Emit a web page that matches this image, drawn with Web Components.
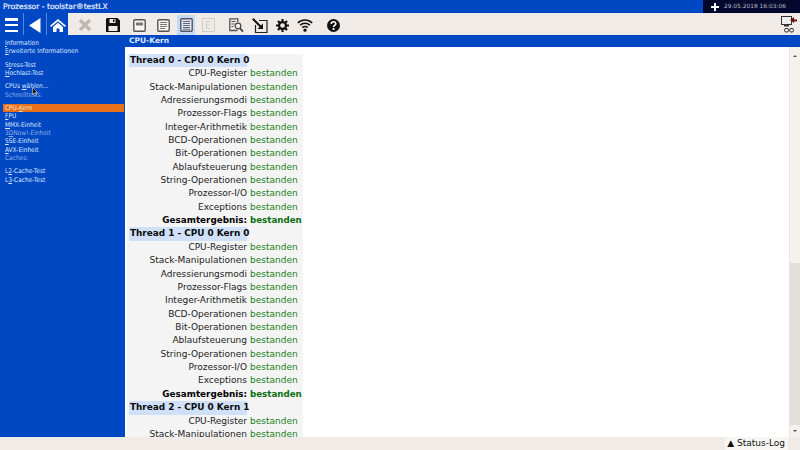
<!DOCTYPE html>
<html lang="de"><head><meta charset="utf-8"><title>Prozessor</title>
<style>
html,body{margin:0;padding:0;width:800px;height:450px;overflow:hidden;font-family:"DejaVu Sans",sans-serif}
body{display:block}
</style></head><body>
<app-shell></app-shell>
<script>
const ic={
back:'<svg width="12" height="15" viewBox="0 0 12 15"><path d="M11.500 0v15L0 7.500z" fill="#fff"/></svg>',
home:'<svg width="16" height="13" viewBox="0 0 16 13"><path d="M8 0 0 6.700l1 1.200L8 2.200l7 5.700 1-1.200z" fill="#fff"/><path d="M3 8 8 3.800 13 8v5h-3.500V9.500h-3V13H3z" fill="#fff"/></svg>',
x:'<svg width="14" height="12" viewBox="0 0 14 12"><path d="M2 1l10 10M12 1 2 11" stroke="#bdb8b4" stroke-width="3.400"/></svg>',
save:'<svg width="14" height="14" viewBox="0 0 14 14"><path fill-rule="evenodd" d="M1 0h10.500L14 2.500V14H0V1zM3.500 1v4h6V1zM2.500 8v5h9V8z" fill="#111"/><rect x="7" y="1.500" width="1.500" height="2.500" fill="#111"/></svg>',
doc1:'<svg width="13" height="13" viewBox="0 0 13 13"><rect x=".8" y=".8" width="11.400" height="11.400" rx="1" fill="#f8f6f3" stroke="#555" stroke-width="1.400"/><path d="M3 3.500h7v3H3z" fill="#777"/></svg>',
doc2:'<svg width="13" height="13" viewBox="0 0 13 13"><rect x=".8" y=".8" width="11.400" height="11.400" rx="1" fill="#f8f6f3" stroke="#555" stroke-width="1.400"/><path d="M3 3.500h7M3 5.500h7M3 7.500h7M3 9.500h5" stroke="#777"/></svg>',
doc3:'<svg width="13" height="14" viewBox="0 0 13 14"><rect x=".8" y=".8" width="11.400" height="12.400" rx="1" fill="#dfe8f2" stroke="#556" stroke-width="1.400"/><path d="M3 3.500h7M3 5.500h7M3 7.500h7M3 9.500h7M3 11.200h7" stroke="#667"/></svg>',
doc4:'<svg width="13" height="14" viewBox="0 0 13 14"><rect x=".5" y=".5" width="12" height="13" fill="#eeeae6" stroke="#d2cec9"/><path d="M8.500 3.500H4.500v7h4M4.500 7h3" fill="none" stroke="#d2cec9"/></svg>',
find:'<svg width="15" height="14" viewBox="0 0 15 14"><path d="M8.500 12.500H.8V.8h8V4" fill="none" stroke="#555" stroke-width="1.300"/><path d="M2.500 3.500h4M2.500 6h3M2.500 8.500h2" stroke="#555"/><circle cx="9" cy="8" r="2.800" fill="#f1ede8" stroke="#444" stroke-width="1.200"/><path d="M11 10.300l3 3.300" stroke="#333" stroke-width="1.600"/></svg>',
arrow:'<svg width="16" height="15" viewBox="0 0 16 15"><path d="M7 2.500h8v12H3.500V7" fill="none" stroke="#222" stroke-width="1.200"/><path d="M.8.800l8 8" stroke="#111" stroke-width="2"/><path d="M11 11V5.500L5.500 11z" fill="#111"/></svg>',
gear:'<svg width="13" height="13" viewBox="0 0 15 15"><circle cx="7.500" cy="7.500" r="4" fill="none" stroke="#111" stroke-width="2.600"/><path d="M7.500 0v3M7.500 12v3M0 7.500h3M12 7.500h3M2.200 2.200l2.100 2.100M10.700 10.700l2.100 2.100M12.800 2.200l-2.100 2.100M4.300 10.700l-2.100 2.100" stroke="#111" stroke-width="2.400"/></svg>',
wifi:'<svg width="16" height="14" viewBox="0 0 17 15"><path d="M.8 5.200a11 11 0 0 1 15.400 0M3.200 7.800a7.500 7.500 0 0 1 10.600 0M5.600 10.300a4 4 0 0 1 5.800 0" fill="none" stroke="#111" stroke-width="1.600"/><circle cx="8.500" cy="13" r="1.700" fill="#111"/></svg>',
help:'<svg width="13" height="13" viewBox="0 0 14 14"><circle cx="7" cy="7" r="7" fill="#111"/><path d="M4.600 5.300c0-3 4.900-3 4.900-.2 0 1.800-2.400 1.700-2.400 3.500" fill="none" stroke="#fff" stroke-width="1.700"/><rect x="6.100" y="9.700" width="2" height="2" fill="#fff"/></svg>',
net:'<svg width="16" height="17" viewBox="0 0 16 17"><rect x=".5" y=".5" width="10" height="8" fill="#eee" stroke="#333"/><rect x="3" y="8.500" width="5" height="2" fill="#333"/><path d="M16 3.500h-3V1L9 4l4 3V5.500h3z" fill="#6b0d10"/><rect x="3.500" y="12.500" width="4" height="3.500" rx="1.500" fill="none" stroke="#333"/><rect x="8.500" y="12.500" width="4" height="3.500" rx="1.500" fill="none" stroke="#333"/></svg>'
};
function def(name,html,init){
  customElements.define(name,class extends HTMLElement{
    constructor(){super();this.attachShadow({mode:'open'}).innerHTML=html;}
    connectedCallback(){if(init)init.call(this,this.shadowRoot);}
  });
}
def('title-bar',`<style>
:host{display:flex;height:13px;background:#0047c4;color:#e8effa;font:7.600px/14px "DejaVu Sans",sans-serif}
.t{flex:1;padding:0 0 0 3px;white-space:nowrap;-webkit-text-stroke:.2px #e8effa}
.c{width:97px;background:#04082c;display:flex;align-items:center;color:#b5bccb;font:5.900px/13px "DejaVu Sans",sans-serif}
.p{width:8px;height:8px;margin:0 5px 0 8px;position:relative;flex:none}
.p::before{content:"";position:absolute;left:0;right:0;top:3px;height:2px;background:#fff}
.p::after{content:"";position:absolute;top:0;bottom:0;left:3px;width:2px;background:#fff}
</style><div class="t">Prozessor - toolstar®testLX</div><div class="c"><span class="p"></span>29.05.2018 16:03:06</div>`);
def('tool-btn',`<style>
:host{display:flex;align-items:center;justify-content:center;width:18px;height:20px;margin:2px 0 0 var(--g,5px);flex:none}
:host([active]){background:#c4d9f2}
</style><slot></slot>`);
def('tool-bar',`<style>
:host{display:flex;height:22px;background:#0047c4}
.blue{width:68px;display:flex;flex:none;align-items:center}
.burger{width:13px;height:14px;display:flex;flex-direction:column;justify-content:space-between}
.burger i{height:2.500px;background:#fff;display:block}
.sep{width:1px;height:22px;background:#5a86d8;flex:none}
.b{display:flex;align-items:center;justify-content:center;flex:none;height:22px;padding-top:2px;box-sizing:border-box}
.light{flex:1;background:#f0ebe6;display:flex;align-items:flex-start}
.sp{flex:1}
.net{margin:3px 3px 0 0;display:flex}
</style>
<div class="blue"><div class="b" style="width:23px"><div class="burger"><i></i><i></i><i></i></div></div><div class="sep"></div><div class="b" style="width:22px">${ic.back}</div><div class="sep"></div><div class="b" style="width:21px">${ic.home}</div></div>
<div class="light"><tool-btn style="--g:8px">${ic.x}</tool-btn><tool-btn style="--g:9.500px">${ic.save}</tool-btn><tool-btn style="--g:9px">${ic.doc1}</tool-btn><tool-btn style="--g:5.500px">${ic.doc2}</tool-btn><tool-btn active>${ic.doc3}</tool-btn><tool-btn style="--g:4px">${ic.doc4}</tool-btn><tool-btn style="--g:10px">${ic.find}</tool-btn><tool-btn style="--g:5.500px">${ic.arrow}</tool-btn><tool-btn style="--g:4.500px">${ic.gear}</tool-btn><tool-btn>${ic.wifi}</tool-btn><tool-btn style="--g:10px">${ic.help}</tool-btn><div class="sp"></div><div class="net">${ic.net}</div></div>`);
def('side-item',`<style>
:host{display:block;height:8.350px;line-height:8.350px;margin:0 1px 0 3px;padding-left:2px;white-space:nowrap;color:#dce8fa;font-size:6.500px;font-stretch:condensed}
:host([dim]){color:#8fb0e6}
:host([sel]){background:#e8701a;color:#f5e3d0}
</style><slot></slot>`);
def('side-nav',`<style>
:host{display:flex;flex-direction:column;width:125px;flex:none;background:#0047c4;padding-top:4px;box-sizing:border-box;position:relative;font-family:"DejaVu Sans",sans-serif}
.g{height:5px}
.u{text-decoration:underline;text-decoration-thickness:.6px;text-underline-offset:1px}
svg{position:absolute;left:32px;top:52px}
</style>
<side-item><span class="u">I</span>nformation</side-item>
<side-item><span class="u">E</span>rweiterte Informationen</side-item>
<div class="g"></div>
<side-item>S<span class="u">t</span>ress-Test</side-item>
<side-item><span class="u">H</span>ochlast-Test</side-item>
<div class="g"></div>
<side-item>CPUs <span class="u">w</span>ählen...</side-item>
<side-item dim>Schnelltests:</side-item>
<div class="g"></div>
<side-item sel>CPU-<span class="u">K</span>ern</side-item>
<side-item><span class="u">F</span>PU</side-item>
<side-item><span class="u">M</span>MX-Einheit</side-item>
<side-item dim>3<span class="u">D</span>Now!-Einheit</side-item>
<side-item><span class="u">S</span>SE-Einheit</side-item>
<side-item><span class="u">A</span>VX-Einheit</side-item>
<side-item dim>Caches:</side-item>
<div class="g"></div>
<side-item>L<span class="u">2</span>-Cache-Test</side-item>
<side-item>L<span class="u">3</span>-Cache-Test</side-item>
<svg width="6" height="9" viewBox="0 0 6 9"><path d="M.5.500v7l1.800-1.500L3.500 8.500l1-.5L3.300 5.500H5.500z" fill="#111" stroke="#fff" stroke-width=".5"/></svg>`);
def('result-row',`<style>
:host{display:grid;grid-template-columns:121px 1fr;height:13.370px;line-height:13.370px;white-space:nowrap;font-size:9px;color:#222}
.l{text-align:right;padding-right:3px}
.r{color:#1a8020}
:host([total]) .l{font-weight:bold;color:#000;font-size:8.800px}
:host([total]) .r{font-weight:bold;color:#0a6e10;font-size:8.700px}
</style><div class="l"></div><div class="r">bestanden</div>`,function(s){s.querySelector('.l').textContent=this.getAttribute('label');});
def('thread-head',`<style>
:host{display:block;height:13.370px;line-height:13.370px;white-space:nowrap;font-size:8.900px;font-weight:bold;color:#0a0a0a}
span{display:inline-block;width:118px;background:#cfe0f8;padding-left:1px;box-sizing:border-box}
</style><span><slot></slot></span>`);
def('thread-block',`<style>:host{display:block}</style><thread-head></thread-head><div id="r"></div>`,function(s){
  s.querySelector('thread-head').textContent=this.getAttribute('title');
  const L=['CPU-Register','Stack-Manipulationen','Adressierungsmodi','Prozessor-Flags','Integer-Arithmetik','BCD-Operationen','Bit-Operationen','Ablaufsteuerung','String-Operationen','Prozessor-I/O','Exceptions'];
  const r=s.getElementById('r');
  L.forEach(x=>{const e=document.createElement('result-row');e.setAttribute('label',x);r.append(e);});
  const t=document.createElement('result-row');t.setAttribute('label','Gesamtergebnis:');t.setAttribute('total','');r.append(t);
});
def('scroll-bar',`<style>
:host{display:flex;flex-direction:column;width:11px;flex:none;background:#e3dfdb;border-left:1px solid #e6e6e6;box-sizing:border-box}
.a{background:#f5f1ed;display:flex;align-items:center;justify-content:center;flex:none}
.a i{width:0;height:0;border-left:2px solid transparent;border-right:2px solid transparent}
.u{height:15px;padding-top:3px;box-sizing:border-box}
.d{height:12px}
.u i{border-bottom:2.500px solid #555}.d i{border-top:2.500px solid #555}
.th{height:201px;background:#f5f1ed;flex:none}
.s{flex:1}
</style><div class="a u"><i></i></div><div class="th"></div><div class="s"></div><div class="a d"><i></i></div>`);
def('main-view',`<style>
:host{display:flex;flex-direction:column;flex:1;min-width:0;background:#0047c4}
.h{height:12px;color:#dfeafa;font:bold 7.500px/12px "DejaVu Sans",sans-serif;padding-left:4px;flex:none}
.b{flex:1;display:flex;min-height:0;background:#fff}
.c{flex:1;overflow:hidden;padding:6.800px 0 0 2px}
.t{width:176px;background:#f4f4f4;padding-left:2px;box-sizing:border-box;height:100%}
</style><div class="h">CPU-Kern</div><div class="b"><div class="c"><div class="t">
<thread-block title="Thread 0 - CPU 0 Kern 0"></thread-block>
<thread-block title="Thread 1 - CPU 0 Kern 0"></thread-block>
<thread-block title="Thread 2 - CPU 0 Kern 1"></thread-block>
</div></div><scroll-bar></scroll-bar></div>`);
def('status-bar',`<style>
:host{display:flex;justify-content:flex-end;align-items:center;height:13px;background:#f0ebe6;color:#111;font:9px/13px "DejaVu Sans",sans-serif;flex:none}
span{background:#f8f6f3;padding:0 3px 0 2px;margin-right:12px;white-space:nowrap}
</style><span>▲ Status-Log</span>`);
def('app-shell',`<style>
:host{display:flex;flex-direction:column;width:800px;height:450px;overflow:hidden}
.m{flex:1;display:flex;min-height:0}
</style><title-bar></title-bar><tool-bar></tool-bar><div class="m"><side-nav></side-nav><main-view></main-view></div><status-bar></status-bar>`);
</script></body></html>
